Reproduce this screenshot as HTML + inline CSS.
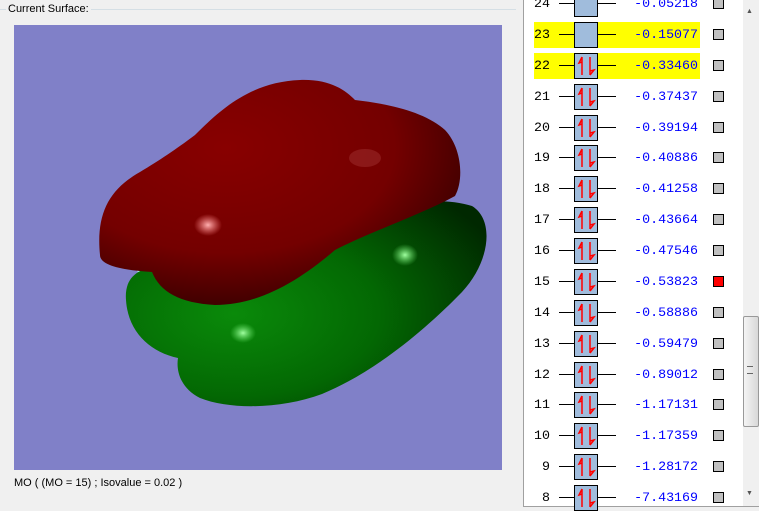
<!DOCTYPE html>
<html><head><style>
body{margin:0;width:759px;height:508px;background:#f0f0f0;position:relative;overflow:hidden;font-family:"Liberation Sans",sans-serif}
.a{position:absolute}
.r{position:absolute;left:534px;width:166px;height:26px}
.r .n{position:absolute;right:150px;top:5px;font:13.3px "Liberation Mono",monospace;color:#000}
.r .e{position:absolute;right:2px;top:5px;font:13.3px "Liberation Mono",monospace;color:#00f}
.r .l1{position:absolute;left:25px;width:15px;top:12px;height:1px;background:#000}
.r .l2{position:absolute;left:64px;width:18px;top:12px;height:1px;background:#000}
.r .b{position:absolute;left:40px;top:0;width:22px;height:24px;border:1px solid #000;background:#a0bcdc}
.r .cb{position:absolute;left:179px;top:7px;width:9px;height:9px;border:1px solid #000;background:#c0c0c0}
.y{background:#ffff00}
</style></head><body>
<div class="a" style="left:0;top:9px;width:516px;height:1px;background:#d5dfe5"></div>
<div class="a" style="left:6px;top:3px;padding:0 2px;background:#f0f0f0;font-size:11px;color:#000">Current Surface:</div>
<div class="a" style="left:14px;top:25px;width:488px;height:445px;background:#8080c8;overflow:hidden">
<svg width="488" height="445" viewBox="14 25 488 445">
<defs>
<radialGradient id="g" cx="0.3" cy="0.55" r="0.8"><stop offset="0" stop-color="#0a8a0a"/><stop offset="0.5" stop-color="#036803"/><stop offset="1" stop-color="#002800"/></radialGradient>
<radialGradient id="rd" cx="0.35" cy="0.3" r="0.85"><stop offset="0" stop-color="#880000"/><stop offset="0.55" stop-color="#740000"/><stop offset="1" stop-color="#200000"/></radialGradient>
<radialGradient id="hl" cx="0.5" cy="0.5" r="0.5"><stop offset="0" stop-color="#ffb0b0"/><stop offset="1" stop-color="#ff8080" stop-opacity="0"/></radialGradient>
<radialGradient id="hg" cx="0.5" cy="0.5" r="0.5"><stop offset="0" stop-color="#a0ffa0"/><stop offset="1" stop-color="#60e060" stop-opacity="0"/></radialGradient>
</defs>
<path d="M135,268 L440,205 L445,222 L145,282Z" fill="#a8e8ec"/>
<path d="M126,300 C124,276 140,262 180,268 L330,228 C380,200 440,196 472,206 C495,220 490,262 462,292 C425,330 375,372 322,394 C282,409 230,410 200,398 C180,388 176,370 178,358 C150,352 128,332 126,300Z" fill="url(#g)"/>
<path d="M100,255 C96,215 108,190 140,172 C160,160 175,150 195,135 C220,110 250,82 300,80 C330,79 345,90 355,100 C390,104 425,112 445,130 C462,148 464,180 455,196 C420,215 370,232 335,250 C300,280 260,305 215,305 C180,303 160,292 152,272 C120,270 100,265 100,255Z" fill="url(#rd)"/>
<ellipse cx="208" cy="225" rx="14" ry="11" fill="url(#hl)"/>
<ellipse cx="365" cy="158" rx="16" ry="9" fill="#a03030" opacity="0.5"/>
<ellipse cx="243" cy="333" rx="13" ry="10" fill="url(#hg)"/>
<ellipse cx="405" cy="255" rx="13" ry="11" fill="url(#hg)"/>
</svg></div>
<div class="a" style="left:14px;top:477px;font-size:11px;color:#000">MO ( (MO = 15) ; Isovalue = 0.02 )</div>
<div class="a" style="left:523px;top:0;width:236px;height:506px;background:#fff;border-left:1px solid #a0a0a0;border-bottom:1px solid #a0a0a0"></div>
<div class="a" style="left:743px;top:0;width:16px;height:506px;background:#f0f0f0"></div>
<div class="a" style="left:746px;top:8px;font-size:7px;color:#555">▲</div>
<div class="a" style="left:746px;top:490px;font-size:7px;color:#555">▼</div>
<div class="a" style="left:743px;top:316px;width:14px;height:109px;border:1px solid #999;border-radius:2px;background:linear-gradient(90deg,#f4f4f4,#d8d8d8)"></div>
<div class="a" style="left:747px;top:366px;width:6px;height:6px;border-top:1px solid #666;border-bottom:1px solid #666"></div>
<div id="rows">
<div class="r" style="top:-9px"><span class="n">24</span><i class="l1"></i><i class="b"></i><i class="l2"></i><span class="e">-0.05218</span><i class="cb"></i></div>
<div class="r y" style="top:22px"><span class="n">23</span><i class="l1"></i><i class="b"></i><i class="l2"></i><span class="e">-0.15077</span><i class="cb"></i></div>
</div>
<script>
var d=[[22,"-0.33460"],[21,"-0.37437"],[20,"-0.39194"],[19,"-0.40886"],[18,"-0.41258"],[17,"-0.43664"],[16,"-0.47546"],[15,"-0.53823"],[14,"-0.58886"],[13,"-0.59479"],[12,"-0.89012"],[11,"-1.17131"],[10,"-1.17359"],[9,"-1.28172"],[8,"-7.43169"]];
var h="";
d.forEach(function(x){var n=x[0];var t=Math.round(35+(23-n)*30.87-13);
h+='<div class="r'+(n==22?' y':'')+'" style="top:'+t+'px"><span class="n">'+n+'</span><i class="l1"></i><i class="b"><svg width="22" height="24" style="position:absolute;left:0;top:0"><path d="M7,3 L7,21 M7,3 L4,9 L7,8" stroke="#f00" stroke-width="1.5" fill="none"/><path d="M15,3 L15,21 M15,21 L19,16 L15,17" stroke="#f00" stroke-width="1.5" fill="none"/></svg></i><i class="l2"></i><span class="e">'+x[1]+'</span><i class="cb"'+(n==15?' style="background:#f00"':'')+'></i></div>';});
document.getElementById("rows").insertAdjacentHTML("beforeend",h);
</script>
</body></html>
